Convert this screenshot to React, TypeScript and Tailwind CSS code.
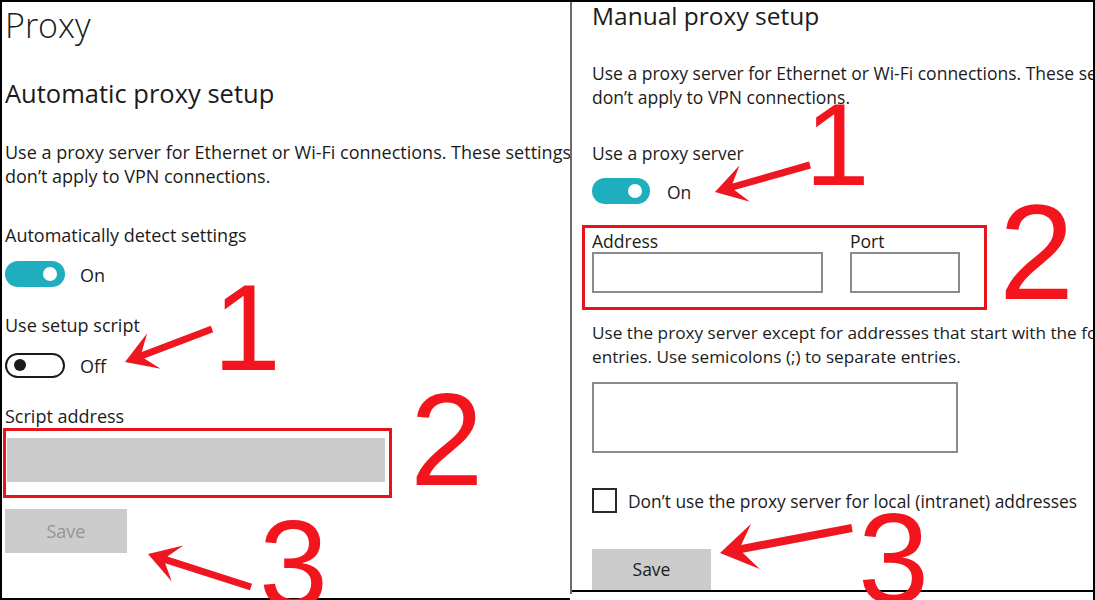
import React from 'react';

type Arrow = { tail: [number, number]; tip: [number, number]; head: number; wing: number; shaft: number };

// polygon for a barbed arrow, tip first
const arrowPoints = ({ tail, tip, head, wing, shaft }: Arrow) => {
  const dx = tail[0] - tip[0];
  const dy = tail[1] - tip[1];
  const len = Math.hypot(dx, dy);
  const ux = dx / len;
  const uy = dy / len;
  const px = -uy;
  const py = ux;
  const notch = head * 0.62;
  const pts: [number, number][] = [
    [tip[0], tip[1]],
    [tip[0] + head * ux + wing * px, tip[1] + head * uy + wing * py],
    [tip[0] + notch * ux + shaft * px, tip[1] + notch * uy + shaft * py],
    [tail[0] + shaft * px, tail[1] + shaft * py],
    [tail[0] - shaft * px, tail[1] - shaft * py],
    [tip[0] + notch * ux - shaft * px, tip[1] + notch * uy - shaft * py],
    [tip[0] + head * ux - wing * px, tip[1] + head * uy - wing * py],
  ];
  return pts.map(([x, y]) => `${x.toFixed(1)},${y.toFixed(1)}`).join(' ');
};

const arrows: Arrow[] = [
  { tail: [210, 327], tip: [123, 360], head: 31, wing: 19, shaft: 3.5 },
  { tail: [249, 585], tip: [146, 552], head: 31, wing: 19, shaft: 3.5 },
  { tail: [808, 163], tip: [713, 190], head: 31, wing: 19, shaft: 3.5 },
  { tail: [850, 526], tip: [718, 551], head: 36, wing: 23, shaft: 4 },
];

const ToggleOn = ({ w }: { w: string }) => (
  <div className={`${w} h-[26px] rounded-full bg-[#1eaebd] flex items-center justify-end pr-[8px]`}>
    <div className="w-[14px] h-[14px] rounded-full bg-white" />
  </div>
);

const ToggleOff = () => (
  <div className="w-[60px] h-[25px] rounded-full border-2 border-[#1a1a1a] flex items-center pl-[7px]">
    <div className="w-[12px] h-[12px] rounded-full bg-[#1a1a1a]" />
  </div>
);

export default function App() {
  return (
    <div className="relative w-[1095px] h-[600px] overflow-hidden bg-white border-t-2 border-l-2 border-r-2 border-black font-['Open_Sans',sans-serif] text-[#1b1b1b]">
      <div className="flex h-full">
        {/* Left: automatic setup */}
        <div className="w-[568px] h-[598px] border-b-2 border-black pl-[3px] flex flex-col overflow-hidden">
          <div className="mt-[3px] text-[34px] leading-[40px] font-light">Proxy</div>
          <div className="mt-[33px] text-[25.5px] leading-[30px]">Automatic proxy setup</div>
          <p className="mt-[32px] text-[18px] leading-[24px] whitespace-nowrap">
            Use a proxy server for Ethernet or Wi-Fi connections. These settings
            <br />
            don’t apply to VPN connections.
          </p>
          <div className="mt-[35px] text-[18px] leading-[24px]">Automatically detect settings</div>
          <div className="mt-[14px] flex items-center gap-[15px]">
            <ToggleOn w="w-[60px]" />
            <span className="text-[18px] leading-[24px] pt-[2px]">On</span>
          </div>
          <div className="mt-[26px] text-[18px] leading-[24px]">Use setup script</div>
          <div className="mt-[15px] flex items-center gap-[15px]">
            <ToggleOff />
            <span className="text-[18px] leading-[24px] pt-[2px]">Off</span>
          </div>
          <div className="mt-[26px] text-[18px] leading-[24px]">Script address</div>
          <div className="-ml-[2px] w-[389px] h-[70px] border-[3px] border-[#e8141c] pl-[1px] pr-[4px] pt-[7px]">
            <div className="h-[44px] w-full bg-[#cccccc]" />
          </div>
          <button className="mt-[11px] w-[122px] h-[44px] bg-[#cccccc] text-[18px] text-[#959595]">Save</button>
        </div>

        <div className="w-[2px] h-[592px] bg-[#6b6b6b]" />

        {/* Right: manual setup */}
        <div className="flex-1 h-[590px] border-b-2 border-black pl-[20px] flex flex-col overflow-hidden">
          <div className="text-[24.5px] leading-[28px] whitespace-nowrap">Manual proxy setup</div>
          <p className="mt-[31px] text-[17.5px] leading-[24px] whitespace-nowrap">
            Use a proxy server for Ethernet or Wi-Fi connections. These settings
            <br />
            don’t apply to VPN connections.
          </p>
          <div className="mt-[32px] text-[17.5px] leading-[24px]">Use a proxy server</div>
          <div className="mt-[13px] flex items-center gap-[17px]">
            <ToggleOn w="w-[58px]" />
            <span className="text-[17.5px] leading-[24px] pt-[2px]">On</span>
          </div>
          <div className="mt-[21px] -ml-[10px] w-[405px] h-[85px] border-[3px] border-[#e8141c] pl-[7px] pt-[2px] flex gap-[27px]">
            <div className="flex flex-col">
              <span className="text-[17.5px] leading-[22px]">Address</span>
              <div className="w-[231px] h-[41px] border-2 border-[#8c8c8c]" />
            </div>
            <div className="flex flex-col">
              <span className="text-[17.5px] leading-[22px]">Port</span>
              <div className="w-[110px] h-[41px] border-2 border-[#8c8c8c]" />
            </div>
          </div>
          <p className="mt-[11px] text-[17.2px] leading-[24px] whitespace-nowrap">
            Use the proxy server except for addresses that start with the following
            <br />
            entries. Use semicolons (;) to separate entries.
          </p>
          <div className="mt-[13px] w-[366px] h-[71px] border-2 border-[#8c8c8c]" />
          <div className="mt-[35px] flex items-center gap-[11px]">
            <div className="w-[25px] h-[25px] border-2 border-[#2a2a2a]" />
            <span className="text-[17.4px] leading-[24px] whitespace-nowrap">Don’t use the proxy server for local (intranet) addresses</span>
          </div>
          <button className="mt-[36px] w-[119px] h-[41px] bg-[#cccccc] text-[17.5px] text-[#1b1b1b]">Save</button>
        </div>
      </div>

      {/* annotations */}
      <svg className="absolute left-0 top-0 pointer-events-none" width={1095} height={600} viewBox="0 0 1095 600">
        {arrows.map((a, i) => (
          <polygon key={i} points={arrowPoints(a)} fill="#ee1620" />
        ))}
      </svg>
      <div className="absolute left-[211px] top-[265px] text-[122px] leading-none text-[#f2151d] font-['Liberation_Sans',Arial,sans-serif]">1</div>
      <div className="absolute left-[408px] top-[372px] text-[132px] leading-none text-[#f2151d] font-['Liberation_Sans',Arial,sans-serif]">2</div>
      <div className="absolute left-[257px] top-[500px] text-[124px] leading-none text-[#f2151d] font-['Liberation_Sans',Arial,sans-serif]">3</div>
      <div className="absolute left-[803px] top-[85px] text-[116px] leading-none text-[#f2151d] font-['Liberation_Sans',Arial,sans-serif]">1</div>
      <div className="absolute left-[997px] top-[183px] text-[135px] leading-none text-[#f2151d] font-['Liberation_Sans',Arial,sans-serif]">2</div>
      <div className="absolute left-[856px] top-[493px] text-[128px] leading-none text-[#f2151d] font-['Liberation_Sans',Arial,sans-serif]">3</div>
    </div>
  );
}
